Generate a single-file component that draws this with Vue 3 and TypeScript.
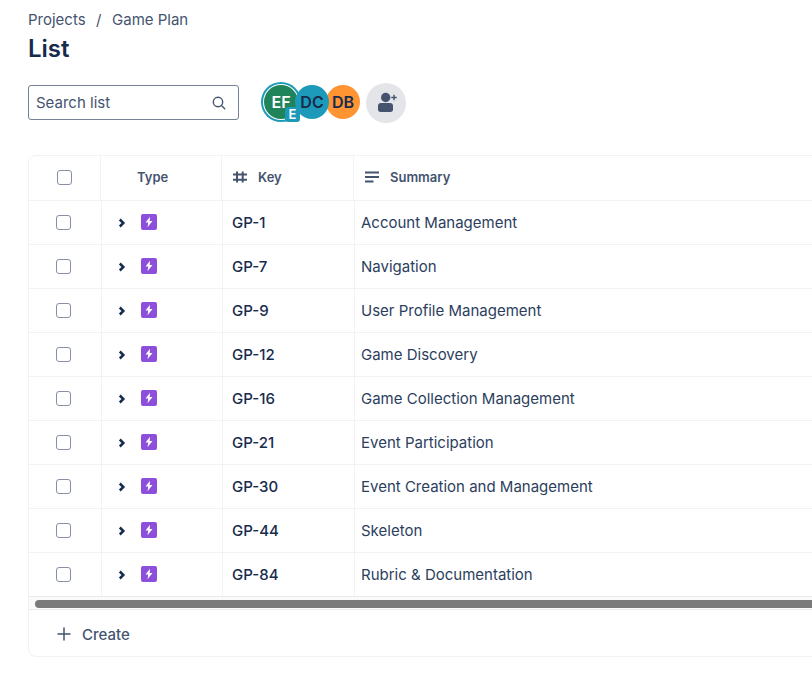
<script setup lang="ts">
interface Row { key: string; summary: string }
const rows: Row[] = [
  { key: 'GP-1', summary: 'Account Management' },
  { key: 'GP-7', summary: 'Navigation' },
  { key: 'GP-9', summary: 'User Profile Management' },
  { key: 'GP-12', summary: 'Game Discovery' },
  { key: 'GP-16', summary: 'Game Collection Management' },
  { key: 'GP-21', summary: 'Event Participation' },
  { key: 'GP-30', summary: 'Event Creation and Management' },
  { key: 'GP-44', summary: 'Skeleton' },
  { key: 'GP-84', summary: 'Rubric & Documentation' },
]
</script>

<template>
  <div class="page">
    <nav class="crumbs"><span>Projects</span><span class="sep">/</span><span>Game Plan</span></nav>
    <h1 class="title">List</h1>
    <div class="toolbar">
      <div class="search">
        <span class="placeholder">Search list</span>
        <svg width="16" height="16" viewBox="0 0 16 16" fill="none" stroke="#44546f" stroke-width="1.4">
          <circle cx="7" cy="7" r="4.7" />
          <path d="M10.5 10.5l3.2 3.2" stroke-linecap="round" />
        </svg>
      </div>
      <div class="avatars">
        <div class="avatar ef">EF<span class="badge">E</span></div>
        <div class="avatar dc">DC</div>
        <div class="avatar db">DB</div>
      </div>
      <div class="invite">
        <svg width="22" height="22" viewBox="0 0 22 22" fill="#44546f">
          <circle cx="10.700" cy="5.500" r="4.700" />
          <path d="M3 14c0-2 1-3 3-3h9c2 0 3 1 3 3v3.500c0 1.500-1 2.500-2.500 2.500h-10C4 20 3 19 3 17.500z" />
          <path d="M16.300 4.800h2V2.800h1.400v2h2v1.400h-2v2h-1.400v-2h-2z" />
        </svg>
      </div>
    </div>

    <div class="table">
      <div class="row head">
        <div class="cell c-check"><span class="box"></span></div>
        <div class="cell c-type"><span class="type-label">Type</span></div>
        <div class="cell c-key">
          <svg class="hash" width="16" height="16" viewBox="0 0 16 16" fill="none" stroke="#44546f" stroke-width="2">
            <path d="M5 2.500v11M10.700 2.500v11M1 5.500h14M1 10.800h14" />
          </svg>
          <span>Key</span>
        </div>
        <div class="cell c-summary">
          <svg class="lines" width="16" height="16" viewBox="0 0 16 16" fill="none" stroke="#44546f" stroke-width="2">
            <path d="M1 3.500h14M1 8h14M1 12.500h8.500" />
          </svg>
          <span>Summary</span>
        </div>
      </div>
      <div v-for="row in rows" :key="row.key" class="row body">
        <div class="cell c-check"><span class="box"></span></div>
        <div class="cell c-type">
          <svg class="chev" width="8" height="10" viewBox="0 0 8 10" fill="none" stroke="#172b4d" stroke-width="2.500">
            <path d="M1.800 1.500L5.300 5L1.800 8.500" />
          </svg>
          <span class="epic">
            <svg width="10" height="12" viewBox="0 0 10 12" fill="#fff">
              <path d="M6 0.800L1.500 6.600h2.700L3.500 11.200L8.500 5H5.700z" />
            </svg>
          </span>
        </div>
        <div class="cell c-key"><span class="key-text">{{ row.key }}</span></div>
        <div class="cell c-summary"><span class="summary-text">{{ row.summary }}</span></div>
      </div>
      <div class="scroll"><div class="thumb"></div></div>
      <div class="create">
        <svg width="16" height="16" viewBox="0 0 16 16" fill="none" stroke="#44546f" stroke-width="1.500">
          <path d="M8 1.500v13M1.500 8h13" />
        </svg>
        <span>Create</span>
      </div>
    </div>
  </div>
</template>

<style>
html, body { margin: 0; overflow: hidden; background: #fff; }
</style>

<style scoped>
.page {
  width: 812px;
  height: 676px;
  overflow: hidden;
  box-sizing: border-box;
  padding: 10px 0 0 28px;
  font-family: Inter, "Liberation Sans", sans-serif;
  color: #172b4d;
}
.crumbs {
  display: flex;
  gap: 10.5px;
  font-size: 15px;
  line-height: 20px;
  color: #44546f;
}
.title {
  margin: 4px 0 0;
  font-size: 24px;
  line-height: 30px;
  font-weight: 600;
  color: #172b4d;
}
.toolbar {
  display: flex;
  align-items: flex-start;
  margin-top: 19px;
  height: 40px;
}
.search {
  width: 211px;
  height: 35px;
  margin-top: 2px;
  box-sizing: border-box;
  border: 1px solid #758195;
  border-radius: 3px;
  display: flex;
  align-items: center;
  justify-content: space-between;
  padding: 0 11px 0 7px;
}
.placeholder { font-size: 15px; color: #44546f; }
.avatars { display: flex; margin-left: 22px; margin-top: 2px; }
.avatar {
  width: 34px;
  height: 34px;
  border-radius: 50%;
  display: flex;
  align-items: center;
  justify-content: center;
  font-size: 16px;
  font-weight: 600;
  position: relative;
}
.ef {
  background: #1f845a;
  color: #fff;
  box-shadow: 0 0 0 1px #fff, 0 0 0 3px #1d9aba;
  margin-left: 3px;
  z-index: 1;
}
.dc { background: #1d9aba; color: #172b4d; margin-left: -3px; z-index: 2; }
.db { background: #ff9433; color: #172b4d; margin-left: -3px; z-index: 1; }
.badge {
  position: absolute;
  right: -2px;
  bottom: -3px;
  width: 15px;
  height: 15px;
  background: #1d9aba;
  color: #fff;
  font-size: 13px;
  font-weight: 600;
  line-height: 15px;
  text-align: center;
  border-radius: 3px;
}
.invite {
  width: 40px;
  height: 40px;
  margin-left: 6px;
  border-radius: 50%;
  background: #e4e5e9;
  display: flex;
  align-items: center;
  justify-content: center;
}
.table {
  margin-top: 32px;
  width: 900px;
  border: 1px solid #f1f2f4;
  border-radius: 8px;
  box-sizing: border-box;
}
.row { display: flex; border-bottom: 1px solid #f1f2f4; }
.head { height: 45px; box-sizing: border-box; }
.body { height: 44px; box-sizing: border-box; }
.cell {
  display: flex;
  align-items: center;
  box-sizing: border-box;
  border-right: 1px solid #f1f2f4;
}
.c-check { width: 72px; justify-content: center; }
.c-type { width: 121px; }
.c-key { width: 132px; }
.c-summary { flex: 1; border-right: 0; }
.body .c-check { width: 73px; padding-right: 4px; }
.box {
  width: 15px;
  height: 15px;
  box-sizing: border-box;
  border: 1.5px solid #8590a2;
  border-radius: 3px;
  background: #fff;
  margin-bottom: 1px;
}
.head .cell {
  font-size: 13px;
  font-weight: 600;
  color: #44546f;
  padding-bottom: 2px;
}
.head .box { margin-bottom: 0; }
.head .c-type { padding-left: 36px; }
.head .c-key { padding-left: 10px; gap: 10px; }
.head .c-summary { padding-left: 10px; gap: 10px; }
.body .c-type { padding-left: 16px; }
.body .c-key { padding-left: 9px; }
.body .c-summary { padding-left: 6px; }
.chev { flex: none; margin-right: 15px; }
.epic {
  width: 16px;
  height: 16px;
  background: #8b4fdb;
  border-radius: 2px;
  display: flex;
  align-items: center;
  justify-content: center;
  margin-top: -1px;
}
.key-text { font-size: 15px; font-weight: 500; color: #172b4d; }
.summary-text { font-size: 15px; color: #2c3e5d; }
.scroll {
  height: 14px;
  background: #fafafa;
  border-bottom: 1px solid #ebebeb;
  border-top: 1px solid #ebebeb;
  box-sizing: border-box;
  display: flex;
  align-items: center;
  padding-left: 6px;
  padding-top: 2px;
  margin-top: -1px;
}
.thumb { width: 860px; height: 8px; background: #7a7a7a; border-radius: 4px; }
.create {
  height: 46px;
  box-sizing: border-box;
  padding-top: 2px;
  display: flex;
  align-items: center;
  gap: 10px;
  padding-left: 27px;
  font-size: 15px;
  font-weight: 500;
  color: #44546f;
}
</style>
